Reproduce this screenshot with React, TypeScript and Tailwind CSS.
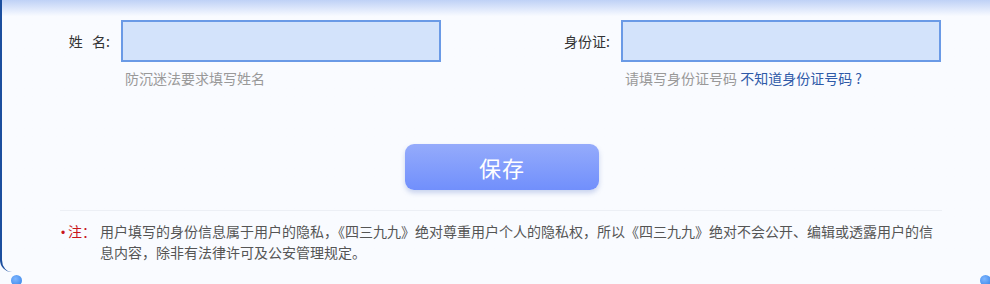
export default function App() {
  return (
    <div className="relative h-[284px] w-[990px] overflow-hidden bg-[#f9fbff] font-['Noto_Sans_CJK_SC',sans-serif] text-[14px] text-[#333]">
      {/* main panel with left border */}
      <div className="h-[272px] rounded-bl-[12px] border-l-2 border-[#1c4f9f] bg-gradient-to-b from-[#bfd1f6] via-[#f9fbff] via-[6%] to-[#f9fbff]">
        {/* form row */}
        <div className="flex pl-[49px] pt-[20px]">
          <div className="flex w-[500px] shrink-0 flex-col">
            <div className="flex items-center">
              <label className="w-[60px] shrink-0 pr-[1px] text-right leading-[20px] text-[#333]">
                姓&nbsp;&nbsp;&nbsp;名:
              </label>
              <input className="ml-[10px] h-[42px] w-[320px] shrink-0 border-2 border-[#6a9ae6] bg-[#d3e3fb] outline-none" />
            </div>
            <p className="ml-[74px] mt-[6px] leading-[20px] text-[#999]">防沉迷法要求填写姓名</p>
          </div>
          <div className="flex w-[500px] shrink-0 flex-col">
            <div className="flex items-center">
              <label className="w-[60px] shrink-0 pr-[1px] text-right leading-[20px] text-[#333]">身份证:</label>
              <input className="ml-[10px] h-[42px] w-[320px] shrink-0 border-2 border-[#6a9ae6] bg-[#d3e3fb] outline-none" />
            </div>
            <p className="ml-[74px] mt-[6px] whitespace-nowrap leading-[20px] text-[#999]">
              请填写身份证号码 <a className="text-[#2f5aa8]">不知道身份证号码 ?</a>
            </p>
          </div>
        </div>

        {/* save button */}
        <div className="flex justify-center pl-[12px] pt-[56px]">
          <button className="h-[46px] w-[194px] rounded-[9px] bg-gradient-to-b from-[#95abfb] to-[#718ffc] text-[22px] tracking-[1px] text-white shadow-[0_3px_5px_rgba(90,120,200,0.3)]">
            保存
          </button>
        </div>

        {/* note */}
        <div className="ml-[58px] mr-[48px] mt-[20px] border-t border-[#eceff5] pt-[10px]">
          <div className="flex leading-[21px]">
            <span className="flex w-[40px] shrink-0 items-baseline whitespace-nowrap text-[#c8161d]">
              <span className="w-[8px] pl-[1px] font-['Liberation_Sans',sans-serif] text-[12px]">•</span>
              注：
            </span>
            <p className="text-[#555]">
              用户填写的身份信息属于用户的隐私，《四三九九》绝对尊重用户个人的隐私权，所以《四三九九》绝对不会公开、编辑或透露用户的信息内容，除非有法律许可及公安管理规定。
            </p>
          </div>
        </div>
      </div>

      {/* corner dots */}
      <span className="absolute left-[11px] top-[275px] h-[11px] w-[11px] rounded-full bg-[radial-gradient(circle_at_40%_35%,#7fb6ff,#2f7fe6)]" />
      <span className="absolute left-[980px] top-[275px] h-[11px] w-[11px] rounded-full bg-[radial-gradient(circle_at_40%_35%,#7fb6ff,#2f7fe6)]" />
    </div>
  );
}
